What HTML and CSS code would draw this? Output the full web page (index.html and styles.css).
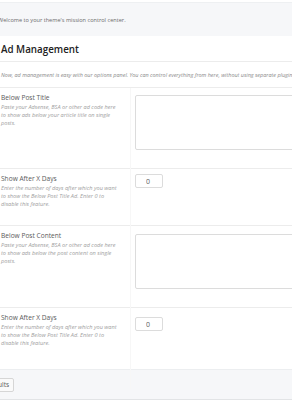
FILE: index.html
```html
<!DOCTYPE html>
<html lang="en">
<head>
  <meta charset="UTF-8">
  <meta name="viewport" content="width=device-width, initial-scale=1.0">
  <title>Theme Options</title>
  <link rel="stylesheet" href="styles.css">
</head>
<body>
  <div class="panel">
    <div class="panel-top"></div>

    <div class="panel-intro">
      <p class="intro-text">Welcome to your theme's mission control center.</p>
    </div>

    <div class="section">
      <h2 class="section-title">Ad Management</h2>
      <p class="section-desc">Now, ad management is easy with our options panel. You can control everything from here, without using separate plugins.</p>

      <!-- Below Post Title -->
      <div class="option option-first">
        <div class="option-label">
          <h3 class="option-name">Below Post Title</h3>
          <p class="option-help">Paste your Adsense, BSA or other ad code here to show ads below your article title on single posts.</p>
        </div>
        <div class="option-field">
          <textarea class="field-area"></textarea>
        </div>
      </div>

      <!-- Show After X Days -->
      <div class="option option-second">
        <div class="option-label">
          <h3 class="option-name">Show After X Days</h3>
          <p class="option-help">Enter the number of days after which you want to show the Below Post Title Ad. Enter 0 to disable this feature.</p>
        </div>
        <div class="option-field">
          <input type="text" class="field-small" value="0">
        </div>
      </div>

      <!-- Below Post Content -->
      <div class="option option-third">
        <div class="option-label">
          <h3 class="option-name">Below Post Content</h3>
          <p class="option-help">Paste your Adsense, BSA or other ad code here to show ads below the post content on single posts.</p>
        </div>
        <div class="option-field">
          <textarea class="field-area"></textarea>
        </div>
      </div>

      <!-- Show After X Days -->
      <div class="option option-last">
        <div class="option-label">
          <h3 class="option-name">Show After X Days</h3>
          <p class="option-help">Enter the number of days after which you want to show the Below Post Title Ad. Enter 0 to disable this feature.</p>
        </div>
        <div class="option-field">
          <input type="text" class="field-small" value="0">
        </div>
      </div>
    </div>

    <div class="panel-footer">
      <button type="button" class="reset-button">Reset Defaults</button>
    </div>
  </div>
</body>
</html>
```

FILE: styles.css
```css
/* Couleurs du panneau */
:root {
  --panel-bg: #f6f7f9;
  --border: #ececec;
  --border-field: #dcdcdc;
  --text: #5a5a5a;
  --text-title: #222222;
  --text-muted: #a0a0a0;
  --white: #ffffff;
}

* {
  box-sizing: border-box;
}

body {
  margin: 0;
  font-family: "Open Sans", "Liberation Sans", sans-serif;
  color: var(--text);
  background-color: var(--white);
  overflow: hidden;
}

.panel {
  width: 292px;
}

.panel-top {
  height: 3px;
  background-color: var(--white);
  border-bottom: 1px solid #eef0f2;
}

.panel-intro {
  height: 33px;
  display: flex;
  align-items: center;
  background-color: var(--panel-bg);
}

.intro-text {
  margin: 0 0 0 -2px;
  font-size: 5.6px;
  color: #6b6b6b;
  white-space: nowrap;
}

.section-title {
  margin: 0;
  padding: 7px 1px 0;
  height: 26px;
  font-size: 9.8px;
  line-height: 14px;
  font-weight: 600;
  color: var(--text-title);
  border-bottom: 1px solid var(--border);
}

.section-desc {
  margin: 0;
  height: 26px;
  padding: 9px 1px 0;
  font-size: 5.45px;
  font-style: italic;
  color: #8a8a8a;
  white-space: nowrap;
  overflow: hidden;
  border-bottom: 1px solid var(--border);
}

.option {
  display: grid;
  grid-template-columns: 130px 1fr;
  column-gap: 4px;
  padding: 5px 0 0 1px;
  border-bottom: 1px solid var(--border);
}

.option-first {
  height: 81px;
}

.option-second {
  height: 57px;
}

.option-third {
  height: 82px;
}

.option-last {
  height: 61px;
  border-bottom: none;
}

.option-label {
  padding-right: 11px;
  border-right: 1px solid #f7f7f7;
  margin-top: -5px;
  padding-top: 5px;
  margin-bottom: -20px;
}

.option-name {
  margin: 0;
  font-size: 6.6px;
  line-height: 10px;
  font-weight: 400;
  color: var(--text);
}

.option-help {
  margin: 0;
  font-size: 5.6px;
  line-height: 8px;
  font-style: italic;
  color: var(--text-muted);
}

.option-field {
  display: flex;
  align-items: flex-start;
}

.field-area {
  display: block;
  width: 200px;
  height: 55px;
  margin-top: 2px;
  border: 1px solid var(--border-field);
  border-radius: 2px;
  background-color: var(--white);
  resize: none;
}

.option-third .field-area {
  margin-top: 3px;
}

.field-small {
  width: 28px;
  height: 14px;
  margin-top: 0;
  padding: 0 0 0 10px;
  border: 1px solid var(--border-field);
  border-radius: 2px;
  font-family: "Open Sans", "Liberation Sans", sans-serif;
  font-size: 7px;
  color: var(--text);
  background-color: var(--white);
}

.option-last .field-small {
  margin-top: 4px;
}

.panel-footer {
  height: 31px;
  display: flex;
  align-items: center;
  background-color: var(--panel-bg);
  border-top: 1px solid #eceef0;
  border-bottom: 1px solid #e2e4e6;
}

.reset-button {
  margin-left: -40px;
  height: 14px;
  padding: 0 4px;
  font-family: "Open Sans", "Liberation Sans", sans-serif;
  font-size: 6.6px;
  color: var(--text);
  background-color: #fafafa;
  border: 1px solid #d6d6d6;
  border-radius: 2px;
}
```
